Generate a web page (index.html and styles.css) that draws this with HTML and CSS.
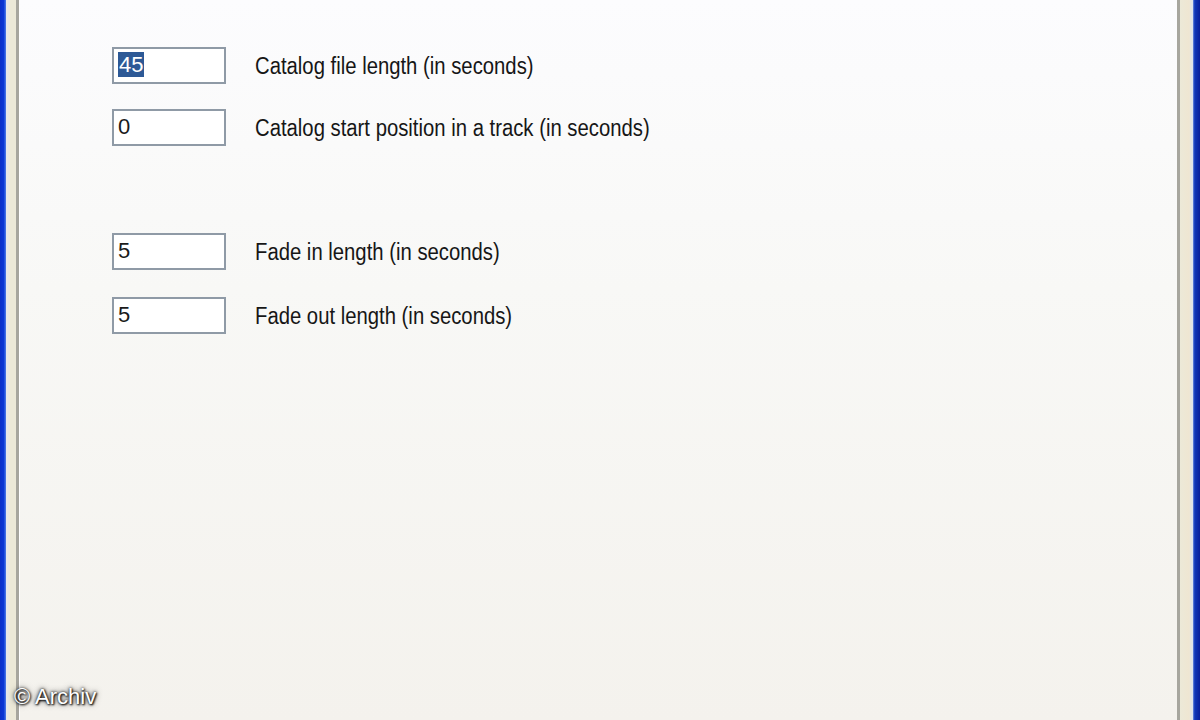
FILE: index.html
```html
<!DOCTYPE html>
<html>
<head>
<meta charset="utf-8">
<link rel="stylesheet" href="styles.css">
</head>
<body>
<div class="window">
  <div class="frame frame-left">
    <div class="blue"></div>
    <div class="beige"></div>
  </div>
  <div class="panel">
    <div class="group">
      <div class="row">
        <div class="field"><span class="sel">45</span></div>
        <span class="label">Catalog file length (in seconds)</span>
      </div>
      <div class="row">
        <div class="field">0</div>
        <span class="label">Catalog start position in a track (in seconds)</span>
      </div>
    </div>
    <div class="group group-fade">
      <div class="row">
        <div class="field">5</div>
        <span class="label">Fade in length (in seconds)</span>
      </div>
      <div class="row">
        <div class="field">5</div>
        <span class="label">Fade out length (in seconds)</span>
      </div>
    </div>
    <div class="watermark">© Archiv</div>
  </div>
  <div class="frame frame-right">
    <div class="beige"></div>
    <div class="blue"></div>
  </div>
</div>
</body>
</html>
```

FILE: styles.css
```css
html, body {
  margin: 0;
  padding: 0;
  width: 1200px;
  height: 720px;
  overflow: hidden;
}

body {
  font-family: "Liberation Sans", Arial, sans-serif;
  color: #141414;
}

.window {
  display: flex;
  width: 1200px;
  height: 720px;
}

.frame {
  display: flex;
  flex: none;
}

.frame-left .blue {
  width: 6px;
  background: linear-gradient(to right, #0a2fc8 0, #0a36d6 60%, #4f7ee8 100%);
}

.frame-left .beige {
  width: 10px;
  background: linear-gradient(to right, #e6e8ee, #ece9d8 40%, #ece9d8);
}

.frame-right .beige {
  width: 13px;
  background: linear-gradient(to right, #ece9d8, #efe6d2 70%, #dfe4ee);
}

.frame-right .blue {
  width: 7px;
  background: linear-gradient(to right, #6f8ee0 0, #1238b8 25%, #0a1f9a 100%);
}

.panel {
  position: relative;
  flex: 1;
  border-left: 3px solid #a7a69e;
  border-right: 3px solid #a7a69e;
  box-shadow: inset 1px 0 0 #ffffff;
  background: linear-gradient(to bottom, #fcfcfe 0%, #f8f8f6 40%, #f4f2ed 100%);
  padding: 47px 0 0 93px;
}

.group {
  display: flex;
  flex-direction: column;
  gap: 25px;
}

.group-fade {
  margin-top: 87px;
  gap: 27px;
}

.row {
  display: flex;
  align-items: center;
}

.field {
  box-sizing: border-box;
  width: 114px;
  height: 37px;
  border: 2px solid #8f9aa6;
  background: #ffffff;
  font-size: 22px;
  line-height: 31px;
  padding-left: 4px;
  color: #1a1a1a;
}

.sel {
  display: inline-block;
  background: #2d5996;
  color: #ffffff;
  line-height: 25px;
  padding: 0 1px;
}

.label {
  display: inline-block;
  margin-left: 29px;
  padding-top: 2px;
  font-size: 23px;
  transform: scaleX(0.882);
  transform-origin: left center;
  color: #161616;
}

.watermark {
  position: absolute;
  left: -5px;
  bottom: 10px;
  font-size: 22px;
  color: #ffffff;
  text-shadow: 0 0 3px #000, 0 0 6px #444, 1px 1px 2px #000;
}
```
